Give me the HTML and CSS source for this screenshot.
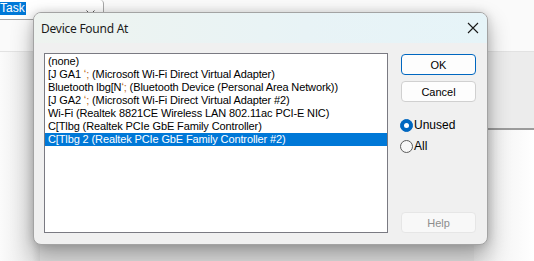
FILE: index.html
```html
<!DOCTYPE html>
<html>
<head>
<meta charset="utf-8">
<link rel="stylesheet" href="styles.css">
</head>
<body>
<div class="desktop">
  <div class="app">
    <div class="toolbar">
      <div class="combo">
        <span class="combo-sel">Task</span>
        <span class="combo-arrow">
          <svg width="9" height="6" viewBox="0 0 9 6"><path d="M0.5 0.5 L4.5 4.5 L8.5 0.5" fill="none" stroke="#555" stroke-width="1"/></svg>
        </span>
      </div>
    </div>
    <div class="app-body">
      <div class="pane-left"></div>
      <div class="pane-mid"></div>
      <div class="pane-right">
        <div class="pane-gray"></div>
        <div class="pane-white"></div>
      </div>
    </div>
  </div>

  <div class="dialog">
    <div class="titlebar">
      <span class="title">Device Found At</span>
      <span class="close">
        <svg width="12" height="12" viewBox="0 0 12 12"><path d="M1 1 L11 11 M11 1 L1 11" stroke="#1a1a1a" stroke-width="1.1" fill="none"/></svg>
      </span>
    </div>
    <div class="dlg-body">
      <ul class="listbox">
        <li>(none)</li>
        <li>[J GA1 <span class="gl">ʻ;</span> (Microsoft Wi-Fi Direct Virtual Adapter)</li>
        <li>Bluetooth lbg[N<span class="gl">ʻ;</span> (Bluetooth Device (Personal Area Network))</li>
        <li>[J GA2 <span class="gl">ʻ;</span> (Microsoft Wi-Fi Direct Virtual Adapter #2)</li>
        <li>Wi-Fi (Realtek 8821CE Wireless LAN 802.11ac PCI-E NIC)</li>
        <li>C[Tlbg (Realtek PCIe GbE Family Controller)</li>
        <li class="sel">C[Tlbg 2 (Realtek PCIe GbE Family Controller #2)</li>
      </ul>
      <div class="side">
        <button class="btn default">OK</button>
        <button class="btn">Cancel</button>
        <div class="radios">
          <label class="radio"><span class="dot on"></span>Unused</label>
          <label class="radio"><span class="dot"></span>All</label>
        </div>
        <button class="btn disabled">Help</button>
      </div>
    </div>
  </div>
</div>
</body>
</html>
```
FILE: styles.css
```css
* { box-sizing: border-box; }
html, body { margin: 0; padding: 0; }
body {
  width: 534px;
  height: 261px;
  overflow: hidden;
  font-family: "Liberation Sans", Arial, sans-serif;
  font-size: 11px;
  color: #000;
  background: #f4f4f4;
}
.desktop {
  position: relative;
  width: 534px;
  height: 261px;
}
.app {
  display: flex;
  flex-direction: column;
  height: 100%;
}
.toolbar {
  height: 52px;
  background: #fafafa;
  border-bottom: 1px solid #e2e2e2;
}
.combo {
  width: 104px;
  height: 20px;
  border: 1px solid #a7a7a7;
  border-left: none;
  border-top: none;
  border-radius: 0 4px 4px 0;
  background: #fff;
  display: flex;
  align-items: flex-start;
  justify-content: space-between;
  padding: 2px 8px 0 0;
}
.combo-sel {
  background: #0078d7;
  color: #fff;
  font-size: 12px;
  line-height: 13px;
  padding: 0 1px 0 0;
}
.combo-arrow { display: flex; margin-top: 8px; }
.app-body {
  flex: 1;
  display: flex;
}
.pane-left {
  width: 40px;
  background: linear-gradient(to right, #fbfbfb, #e8e8e8 80%, #d6d6d6);
}
.pane-mid {
  flex: 1;
  background: #dedede;
}
.pane-right {
  width: 60px;
  display: flex;
  flex-direction: column;
}
.pane-gray {
  height: 78px;
  background: #ececec;
  border-bottom: 2px solid #9b9b9b;
  box-shadow: 0 1px 0 #d8d8d8;
}
.pane-white {
  flex: 1;
  background: linear-gradient(to left, #ffffff, #f4f4f4 60%, #e4e4e4);
}

.dialog {
  position: absolute;
  left: 33px;
  top: 12px;
  width: 455px;
  height: 233px;
  background: #f0f0f0;
  border: 1px solid #a3a3a3;
  border-radius: 8px;
  overflow: hidden;
  box-shadow: 0 10px 22px rgba(0,0,0,0.3), 0 0 10px rgba(0,0,0,0.14);
  display: flex;
  flex-direction: column;
}
.titlebar {
  height: 30px;
  flex: none;
  background: linear-gradient(to right, #eef3ef, #e8f3f6 60%, #e6f4f8);
  display: flex;
  align-items: center;
  justify-content: space-between;
  padding: 0 8px 0 7px;
}
.title {
  font-family: "Noto Sans", "Open Sans", sans-serif;
  font-size: 12px;
  color: #1b1b1b;
  letter-spacing: -0.25px;
}
.close { display: flex; }

.dlg-body {
  flex: 1;
  display: flex;
  padding: 10px 11px 11px 10px;
  gap: 13px;
}
.listbox {
  list-style: none;
  margin: 0;
  padding: 0;
  width: 345px;
  height: 180px;
  background: #fff;
  border: 1px solid #7a7a82;
  padding-top: 1px;
}
.listbox li {
  height: 13px;
  line-height: 13px;
  padding-left: 3px;
  white-space: nowrap;
  overflow: hidden;
  letter-spacing: -0.12px;
}
.listbox li.sel {
  background: #0078d7;
  color: #fff;
}
.gl { color: #b86a1e; }
.listbox li.sel .gl { color: #fff; }

.side {
  width: 75px;
  display: flex;
  flex-direction: column;
  padding-top: 1px;
}
.btn {
  width: 75px;
  height: 21px;
  font-family: "Liberation Sans", Arial, sans-serif;
  font-size: 11px;
  color: #000;
  background: #fdfdfd;
  border: 1px solid #d0d0d0;
  border-radius: 4px;
  padding: 0;
  margin: 0 0 6px 0;
}
.btn.default {
  border-color: #0067c0;
}
.btn.disabled {
  margin-top: auto;
  margin-bottom: 0;
  color: #8d8d8d;
  background: #f8f8f8;
  border-color: #e6e6e6;
}
.radios {
  display: flex;
  flex-direction: column;
  gap: 8px;
  margin-top: 11px;
}
.radio {
  display: flex;
  align-items: center;
  gap: 1px;
  height: 13px;
  font-size: 12px;
  line-height: 13px;
  margin-left: -1px;
}
.dot {
  width: 13px;
  height: 13px;
  border-radius: 50%;
  border: 1px solid #5c5c5c;
  background: #f7f7f7;
  flex: none;
  display: flex;
  align-items: center;
  justify-content: center;
}
.dot.on {
  background: #0067c0;
  border-color: #0067c0;
}
.dot.on::after {
  content: "";
  width: 5px;
  height: 5px;
  border-radius: 50%;
  background: #fff;
}
```
